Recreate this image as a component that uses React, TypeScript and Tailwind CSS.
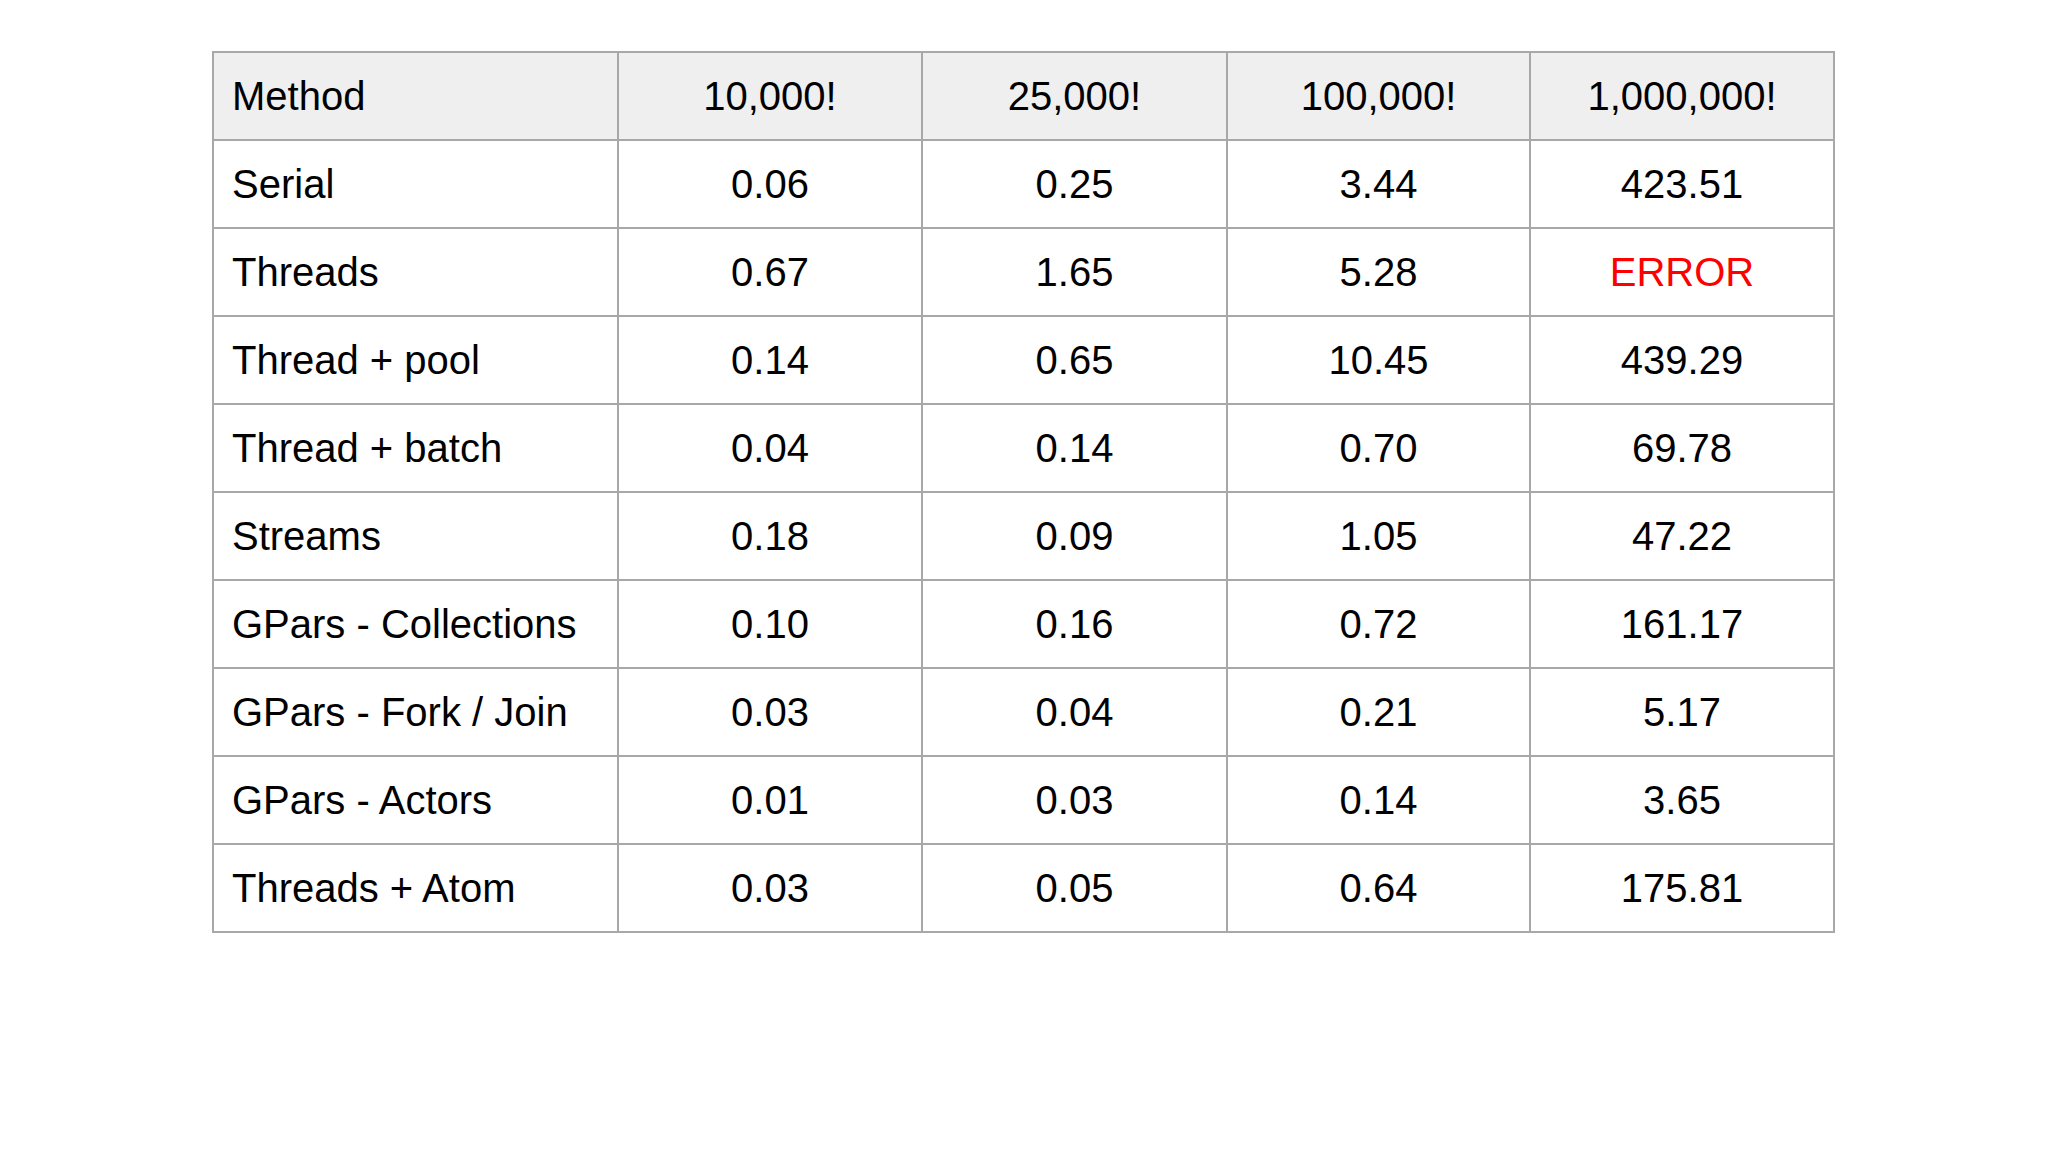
import React from "react";

const header = ["Method", "10,000!", "25,000!", "100,000!", "1,000,000!"];
const rows: string[][] = [
  ["Serial", "0.06", "0.25", "3.44", "423.51"],
  ["Threads", "0.67", "1.65", "5.28", "ERROR"],
  ["Thread + pool", "0.14", "0.65", "10.45", "439.29"],
  ["Thread + batch", "0.04", "0.14", "0.70", "69.78"],
  ["Streams", "0.18", "0.09", "1.05", "47.22"],
  ["GPars - Collections", "0.10", "0.16", "0.72", "161.17"],
  ["GPars - Fork / Join", "0.03", "0.04", "0.21", "5.17"],
  ["GPars - Actors", "0.01", "0.03", "0.14", "3.65"],
  ["Threads + Atom", "0.03", "0.05", "0.64", "175.81"],
];

export default function App() {
  return (
    <div className="w-[2048px] h-[1152px] bg-white pl-[212px] pt-[51px] text-black" style={{ fontFamily: '"Liberation Sans", Arial, sans-serif' }}>
      <table className="table-fixed border-collapse w-[1621px] text-[40px] leading-none">
        <colgroup>
          <col className="w-[405px]" />
          <col className="w-[304px]" />
          <col className="w-[305px]" />
          <col className="w-[303px]" />
          <col className="w-[304px]" />
        </colgroup>
        <thead>
          <tr className="bg-[#efefef]">
            {header.map((h, i) => (
              <th
                key={h}
                className={`h-[88px] border-2 border-[#a8a8a8] font-normal ${i === 0 ? "text-left pl-[18px]" : "text-center"}`}
              >
                {h}
              </th>
            ))}
          </tr>
        </thead>
        <tbody>
          {rows.map((r) => (
            <tr key={r[0]}>
              {r.map((c, i) => (
                <td
                  key={i}
                  className={`h-[88px] border-2 border-[#a8a8a8] ${i === 0 ? "text-left pl-[18px]" : "text-center"} ${c === "ERROR" ? "text-[#ff0000]" : ""}`}
                >
                  {c}
                </td>
              ))}
            </tr>
          ))}
        </tbody>
      </table>
    </div>
  );
}
